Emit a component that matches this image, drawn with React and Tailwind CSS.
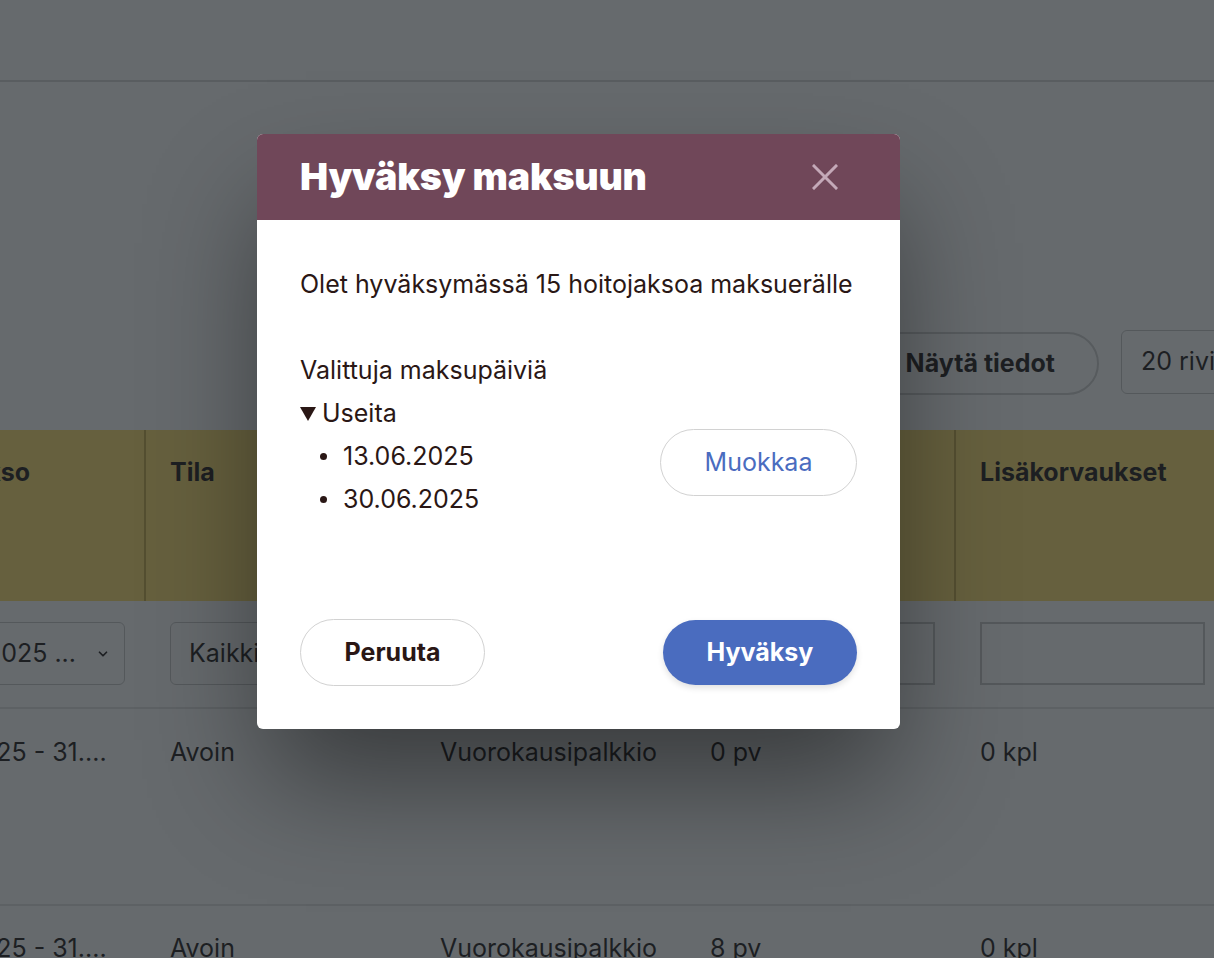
export default function App() {
  return (
    <div className="relative h-[958px] w-[1214px] overflow-hidden bg-white font-['Inter',sans-serif] text-[25px] text-[#1c1818]">
      {/* sivun yläpalkki */}
      <div className="h-[82px] border-b-2 border-[#d6d6d6]" />

      {/* työkalurivi */}
      <div className="flex h-[348px] items-start gap-[22px] pl-[850px] pt-[250px]">
        <div className="flex h-[63px] w-[249px] shrink-0 items-center justify-end rounded-full border-2 border-[#d0d0d0] pr-[42px] font-bold">
          Näytä tiedot
        </div>
        <div className="-mt-[2px] flex h-[64px] w-[200px] shrink-0 items-center rounded-md border border-[#c8c8c8] pl-[19px]">
          20 riviä
        </div>
      </div>

      {/* taulukko */}
      <div className="-ml-[124px] w-[1350px]">
        <div className="grid h-[171px] grid-cols-[270px_270px_270px_270px_270px] bg-[#ffe06e] font-bold">
          <div className="border-r-2 border-[#c7ab45] pl-[24px] pt-[26px] leading-[32px]">Hoitojakso</div>
          <div className="border-r-2 border-[#c7ab45] pl-[24px] pt-[26px] leading-[32px]">Tila</div>
          <div className="border-r-2 border-[#c7ab45] pl-[24px] pt-[26px] leading-[32px]">Tyyppi</div>
          <div className="border-r-2 border-[#c7ab45] pl-[24px] pt-[26px] leading-[32px]">Päivät</div>
          <div className="pl-[24px] pt-[26px] leading-[32px]">Lisäkorvaukset</div>
        </div>

        <div className="grid h-[108px] grid-cols-[270px_270px_270px_270px_270px] border-b-2 border-[#e2e2e2] pt-[21px]">
          <div className="pl-[24px]">
            <div className="flex h-[63px] w-[225px] items-center justify-end gap-[20px] overflow-hidden rounded-md border border-[#c6c6c6] pr-[14px]">
              <span className="whitespace-nowrap">01.06.2025 ...</span>
              <svg className="shrink-0" width="14" height="14" viewBox="0 0 24 24" fill="none" stroke="currentColor" strokeWidth="3" strokeLinecap="round" strokeLinejoin="round">
                <path d="M6 9l6 6 6-6" />
              </svg>
            </div>
          </div>
          <div className="pl-[24px]">
            <div className="flex h-[63px] w-[225px] items-center rounded-md border border-[#c6c6c6] pl-[18px]">Kaikki</div>
          </div>
          <div className="pl-[24px]">
            <div className="h-[63px] w-[225px] border-2 border-[#c6c6c6]" />
          </div>
          <div className="pl-[24px]">
            <div className="h-[63px] w-[225px] border-2 border-[#c6c6c6]" />
          </div>
          <div className="pl-[24px]">
            <div className="h-[63px] w-[225px] border-2 border-[#c6c6c6]" />
          </div>
        </div>

        <div className="grid h-[197px] grid-cols-[270px_270px_270px_270px_270px] border-b-2 border-[#e2e2e2] pt-[27px] leading-[32px]">
          <div className="whitespace-nowrap pl-[19px]">01.06.2025 - 31....</div>
          <div className="pl-[24px]">Avoin</div>
          <div className="pl-[24px]">Vuorokausipalkkio</div>
          <div className="pl-[24px]">0 pv</div>
          <div className="pl-[24px]">0 kpl</div>
        </div>

        <div className="grid h-[197px] grid-cols-[270px_270px_270px_270px_270px] pt-[26px] leading-[32px]">
          <div className="whitespace-nowrap pl-[19px]">01.06.2025 - 31....</div>
          <div className="pl-[24px]">Avoin</div>
          <div className="pl-[24px]">Vuorokausipalkkio</div>
          <div className="pl-[24px]">8 pv</div>
          <div className="pl-[24px]">0 kpl</div>
        </div>
      </div>

      {/* taustan himmennys + dialogi */}
      <div className="absolute inset-0 bg-[rgba(30,36,40,0.68)] pl-[257px] pt-[134px]">
        <div className="w-[643px] overflow-hidden rounded-[6px] bg-white text-[#2a1715] shadow-[0_60px_110px_-10px_rgba(0,0,0,0.45)]">
          <div className="flex h-[86px] items-center justify-between bg-[#704759] pl-[43px] pr-[62px]">
            <h2 className="text-[37.5px] font-black leading-none tracking-[-0.2px] text-white">Hyväksy maksuun</h2>
            <svg width="26" height="26" viewBox="0 0 26 26" stroke="#c4a9b8" strokeWidth="3" strokeLinecap="square">
              <path d="M2 2L24 24M24 2L2 24" />
            </svg>
          </div>

          <div className="px-[43px] pb-[43px] pt-[43px]">
            <p className="leading-[43px]">Olet hyväksymässä 15 hoitojaksoa maksuerälle</p>
            <p className="mt-[43px] leading-[43px]">Valittuja maksupäiviä</p>

            <div className="flex items-start justify-between">
              <div>
                <div className="flex h-[43px] items-center gap-[6px]">
                  <svg width="16" height="14" viewBox="0 0 16 14">
                    <path d="M0 0H16L8 14Z" fill="#2a1715" />
                  </svg>
                  <span>Useita</span>
                </div>
                <div className="flex h-[43px] items-center pl-[20px]">
                  <span className="h-[7px] w-[7px] rounded-full bg-[#2a1715]" />
                  <span className="ml-[16px]">13.06.2025</span>
                </div>
                <div className="flex h-[43px] items-center pl-[20px]">
                  <span className="h-[7px] w-[7px] rounded-full bg-[#2a1715]" />
                  <span className="ml-[16px]">30.06.2025</span>
                </div>
              </div>
              <button className="mt-[37px] flex h-[67px] w-[197px] items-center justify-center rounded-full border border-[#d2d2d2] text-[#4a6cbf]">
                Muokkaa
              </button>
            </div>

            <div className="mt-[98px] flex items-center justify-between">
              <button className="flex h-[67px] w-[185px] items-center justify-center rounded-full border border-[#d2d2d2] font-bold">
                Peruuta
              </button>
              <button className="flex h-[65px] w-[194px] items-center justify-center rounded-full bg-[#4a6cbf] font-bold text-white shadow-[0_3px_6px_rgba(0,0,0,0.12)]">
                Hyväksy
              </button>
            </div>
          </div>
        </div>
      </div>
    </div>
  );
}
